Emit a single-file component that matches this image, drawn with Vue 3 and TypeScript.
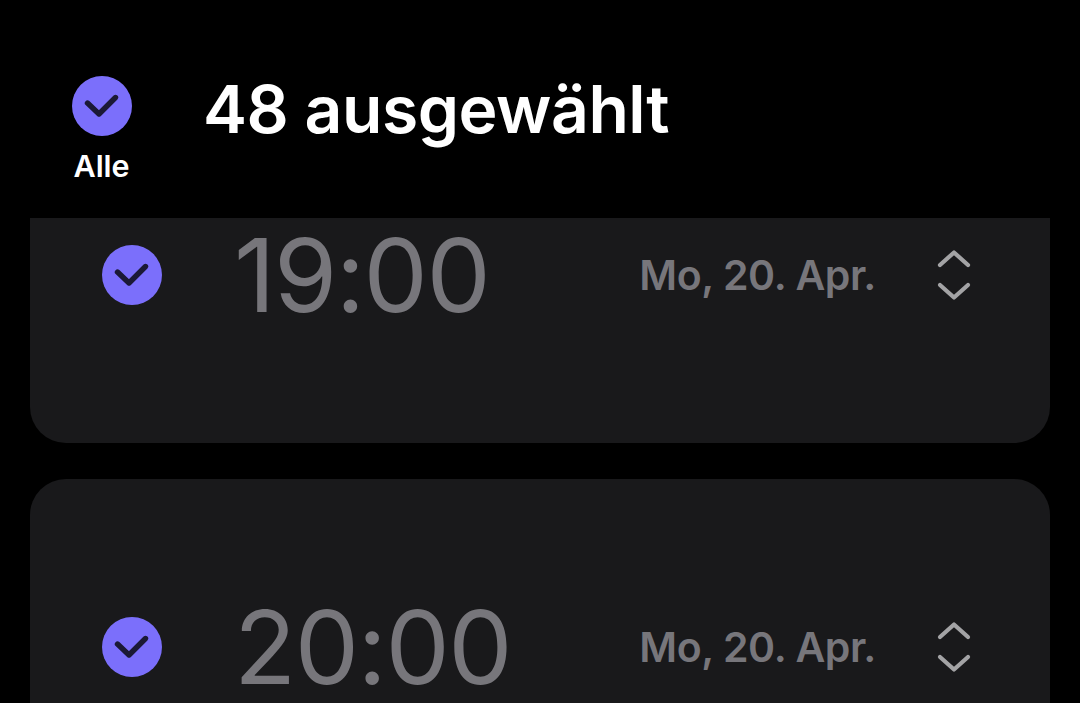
<script setup lang="ts">
interface Alarm { time: string; date: string }
const alarms: Alarm[] = [
  { time: '19:00', date: 'Mo, 20. Apr.' },
  { time: '20:00', date: 'Mo, 20. Apr.' },
]
</script>

<template>
  <div class="screen">
    <header class="top">
      <div class="all">
        <span class="check">
          <svg viewBox="0 0 60 60" width="60" height="60"><path d="M15.5 27 L27 38 L43.5 21.5" /></svg>
        </span>
        <span class="all-label">Alle</span>
      </div>
      <h1 class="title">48 ausgewählt</h1>
    </header>
    <div class="viewport">
      <div class="list">
        <section v-for="a in alarms" :key="a.time" class="card">
          <div class="row">
            <span class="check">
              <svg viewBox="0 0 60 60" width="60" height="60"><path d="M15.5 27 L27 38 L43.5 21.5" /></svg>
            </span>
            <span class="time">{{ a.time }}</span>
            <span class="date">{{ a.date }}</span>
            <svg class="chev" viewBox="0 0 36 52" width="36" height="52">
              <path d="M4 16 L18 3.5 L32 16" />
              <path d="M4 36 L18 48.5 L32 36" />
            </svg>
          </div>
        </section>
      </div>
    </div>
  </div>
</template>

<style>
html, body { margin: 0; background: #000; }
</style>

<style scoped>
.screen {
  width: 1080px;
  height: 703px;
  overflow: hidden;
  background: #000;
  font-family: Inter, "Noto Sans", sans-serif;
}
.top {
  height: 218px;
  box-sizing: border-box;
  padding: 76px 0 0 72px;
  display: flex;
  align-items: flex-start;
}
.all {
  width: 60px;
  display: flex;
  flex-direction: column;
  align-items: center;
}
.all-label {
  margin-top: 12px;
  margin-left: -1px;
  font-size: 30.5px;
  line-height: 36px;
  font-weight: 600;
  letter-spacing: -0.1px;
  color: #fff;
  white-space: nowrap;
}
.title {
  margin: -5px 0 0 71px;
  font-size: 66px;
  line-height: 76px;
  font-weight: 600;
  letter-spacing: -0.45px;
  color: #fff;
  white-space: nowrap;
}
.check {
  flex: none;
  width: 60px;
  height: 60px;
  border-radius: 50%;
  background: #7b6ffb;
  display: block;
}
.check svg { display: block; }
.check path {
  fill: none;
  stroke: #1b1936;
  stroke-width: 5.4;
  stroke-linecap: round;
  stroke-linejoin: round;
}
.viewport {
  height: 485px;
  overflow: hidden;
  padding: 0 30px;
}
.list {
  margin-top: -111px;
  display: flex;
  flex-direction: column;
  gap: 36px;
}
.card {
  height: 336px;
  flex: none;
  box-sizing: border-box;
  padding: 114px 78px 0 72px;
  border-radius: 36px;
  background: #19191b;
}
.row {
  height: 108px;
  display: flex;
  align-items: center;
}
.time {
  margin-left: 72px;
  font-size: 102px;
  line-height: 108px;
  font-weight: 400;
  letter-spacing: -1.5px;
  color: #77767b;
  white-space: nowrap;
}
.date {
  margin-left: auto;
  font-size: 41px;
  font-weight: 600;
  letter-spacing: -0.4px;
  color: #77767b;
  white-space: nowrap;
}
.chev {
  flex: none;
  margin-left: 60px;
}
.chev path {
  fill: none;
  stroke: #a3a3a5;
  stroke-width: 4.2;
  stroke-linecap: round;
  stroke-linejoin: round;
}
</style>
